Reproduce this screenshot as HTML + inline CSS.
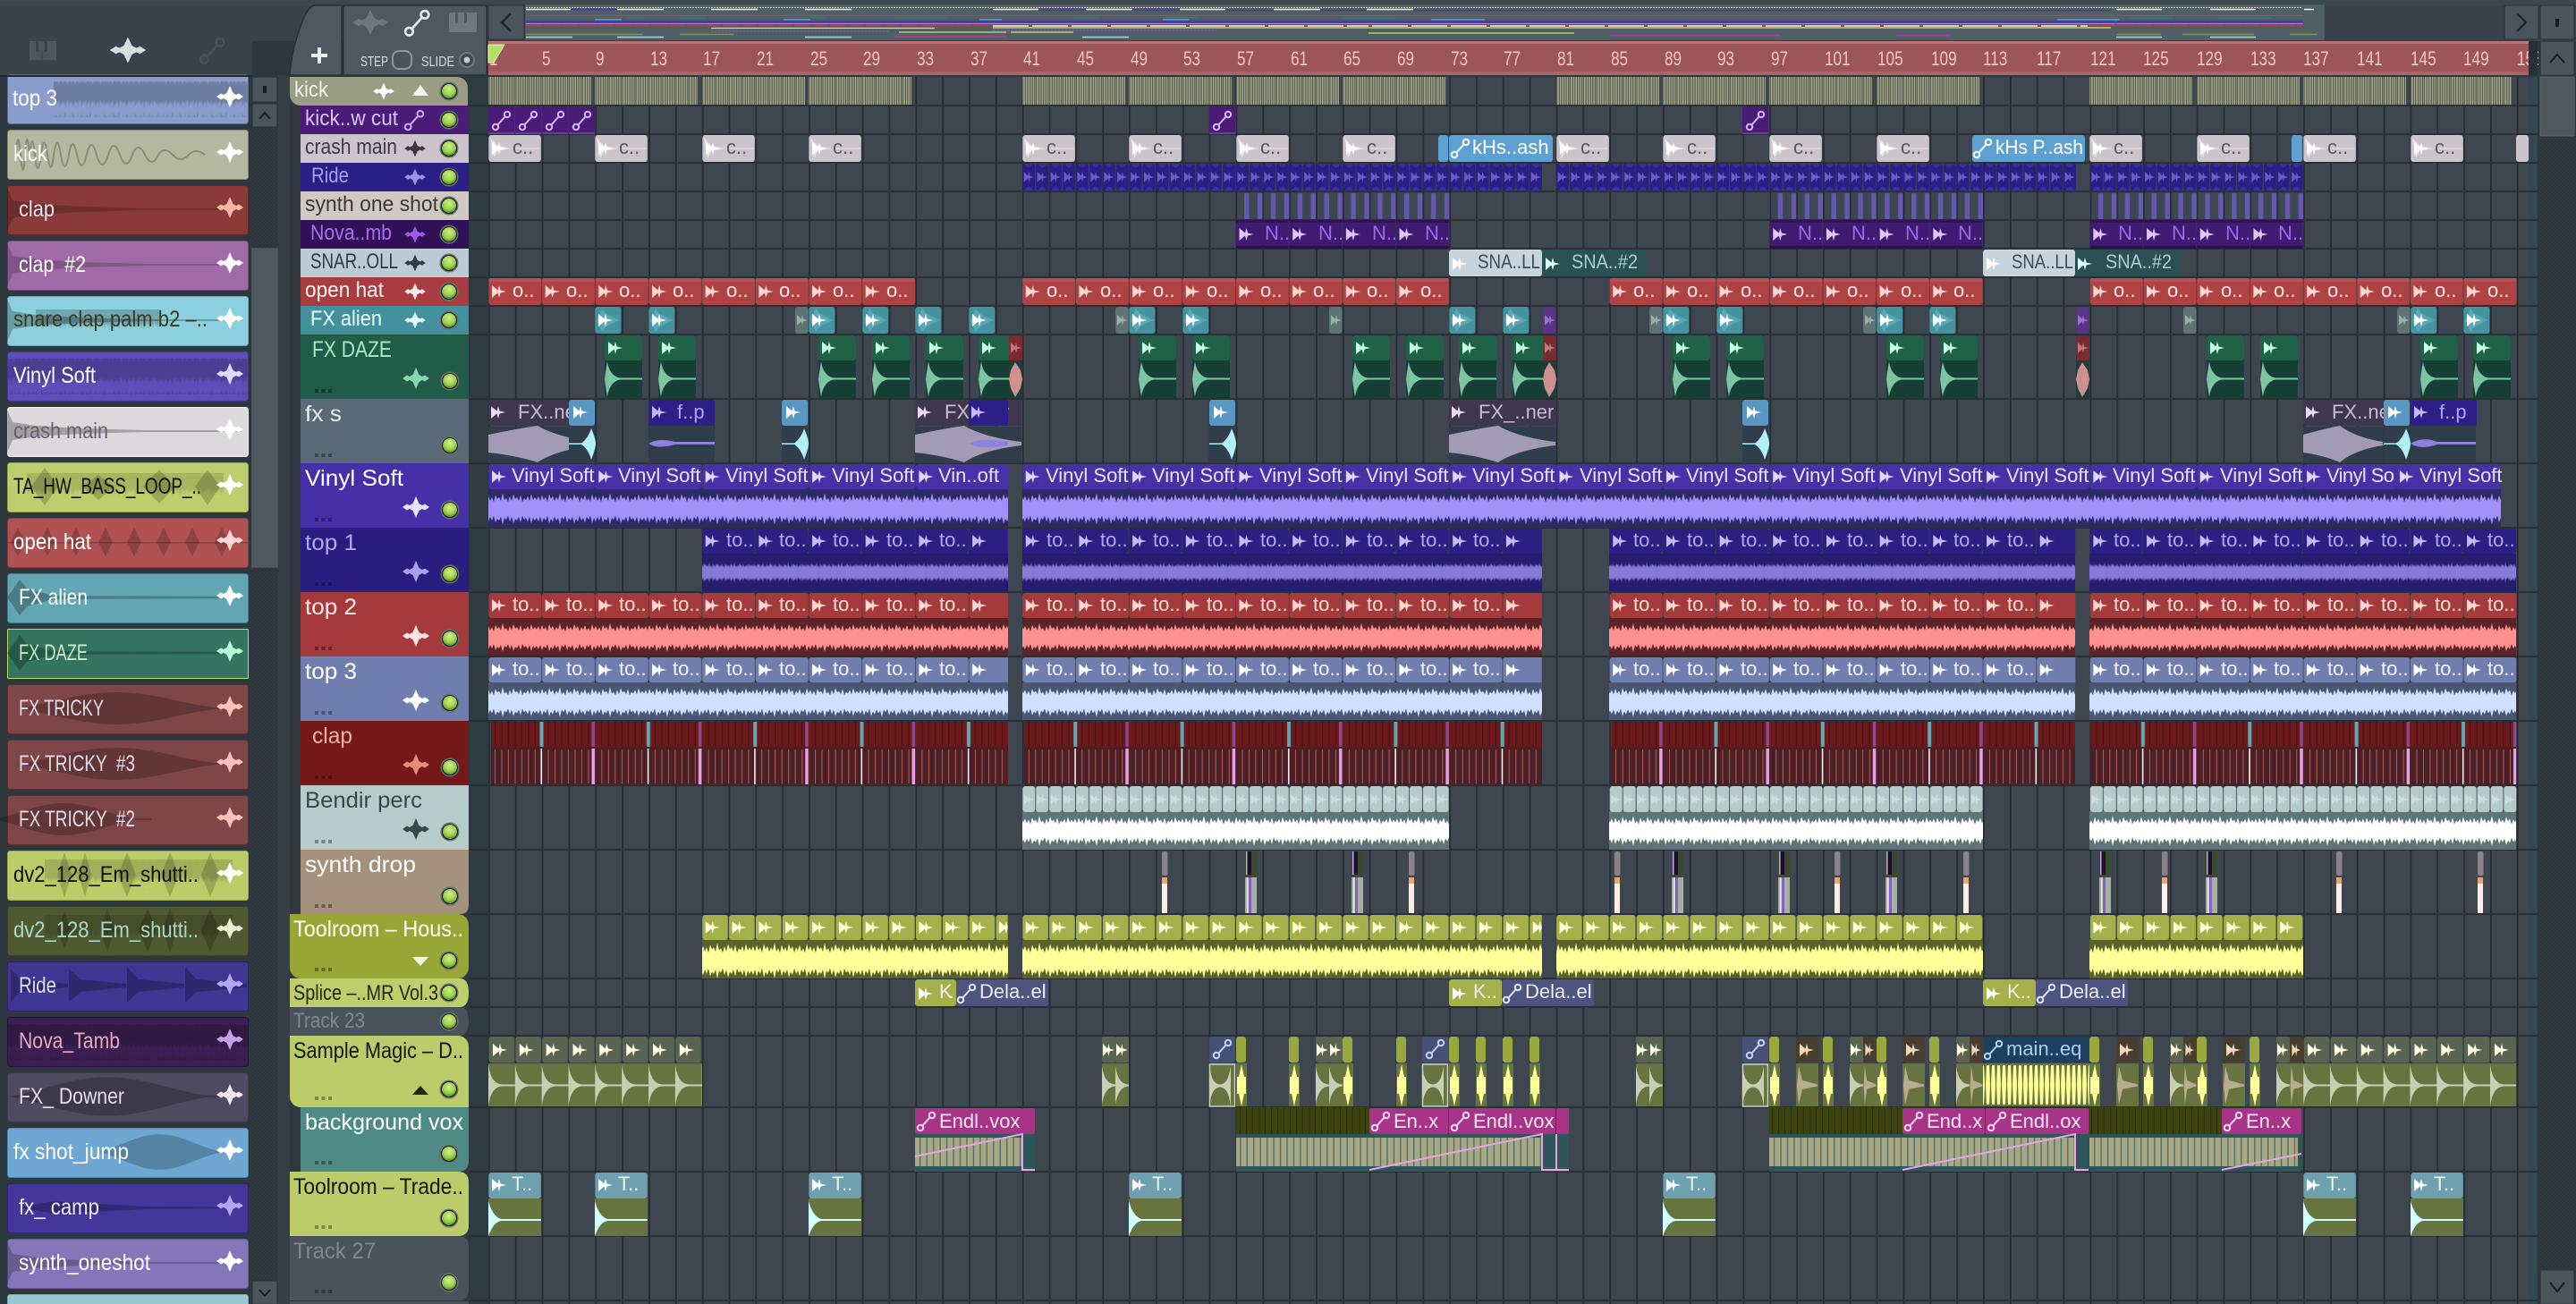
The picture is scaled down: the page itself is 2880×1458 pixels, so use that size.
<!DOCTYPE html>
<html><head><meta charset="utf-8"><title>Playlist</title>
<style>
html,body{margin:0;padding:0;background:#2d373e;overflow:hidden}
svg{display:block}
text{font-family:"Liberation Sans",sans-serif;white-space:pre}
.c text{font-size:22px}
.rk text{font-size:25px}
.ts text{font-size:24px}
.tb text{font-size:25px}
.rl text{font-size:22px;fill:#F5C8BC;transform-box:fill-box;transform-origin:0 0;transform:scaleX(.78)}
</style></head><body>
<svg xmlns="http://www.w3.org/2000/svg" width="2880" height="1458" viewBox="0 0 2880 1458">
<defs>
<path id="p" d="M0 0L6.5 5.5 8 0 9.5 5.5 16 7 9.5 8.5 8 14 6.5 8.5 0 14Z"/>
<path id="w" d="M0-12L3.500-4 7-2 10-3.500 15 0 10 3.500 7 2 3.500 4 0 12-3.500 4-7 2-10 3.500-15 0-10-3.500-7-2-3.500-4Z"/>
<g id="l" fill="none" stroke-width="2"><circle cx="4" cy="18" r="3.2"/><circle cx="17" cy="4" r="3.2"/><path d="M6.5 15.5L14.500 6.500"/></g>
<radialGradient id="lg" cx=".5" cy=".35" r=".7"><stop offset="0" stop-color="#D2F088"/><stop offset=".6" stop-color="#9CCF4C"/><stop offset="1" stop-color="#4E7A1E"/></radialGradient>
<g id="L"><circle r="10.500" fill="#66727A"/><circle r="9" fill="#101408"/><circle r="8" fill="url(#lg)"/></g>
<g id="D"><rect x="0" y="0" width="4" height="4" /><rect x="7.500" y="0" width="4" height="4"/><rect x="15" y="0" width="4" height="4"/></g>
<path id="n" d="M0 0V-9L1 -13 2 -8 3 -14 4 -9 5 -12 6 -7 7 -15 8 -10 9 -13 10 -8 11 -12 12 -9 13 -16 14 -8 15 -11 16 -7 17 -14 18 -9 19 -12 20 -8 21 -15 22 -10 23 -13 24 -7 25 -12 26 -9 27 -14 28 -8 29 -11 30 -7 31 -15 32 -9 33 -13 34 -8 35 -12 36 -7 37 -14 38 -10 39 -12 40 -8 41 -16 42 -9 43 -11 44 -7 45 -13 46 -8 47 -15 48 -10 49 -12 50 -8 51 -14 52 -7 53 -11 54 -9 55 -13 56 -8 57 -15 58 -9 59 -12 60 -9V0Z"/>
<g id="nn"><use href="#n"/><use href="#n" transform="scale(1,-1)"/></g>
<pattern id="pG" x="546" y="0" width="29.84" height="1458" patternUnits="userSpaceOnUse"><rect width="29.84" height="1458" fill="#3E4650"/><rect x="0" width="1.800" height="1458" fill="#252C32"/></pattern>
<pattern id="pK" x="546" y="86" width="14.92" height="32" patternUnits="userSpaceOnUse"><rect width="14.92" height="32" fill="#A6A990"/><path d="M1 0V32M3.800 0V32M6.300 0V32M9 0V32M11.500 0V32M14 0V32" stroke="#565849" stroke-width="1.200"/></pattern>
<pattern id="pR" x="546" y="182" width="14.92" height="32" patternUnits="userSpaceOnUse"><rect x=".4" y="1" width="14.100" height="30" rx="3" fill="#2A1F84"/><path d="M3 1Q7.500 10 12 1zM3 31Q7.500 22 12 31z" fill="#3D2FA0"/><use href="#p" transform="translate(2,10) scale(.7,.85)" fill="#6C5CC8"/></pattern>
<pattern id="pS" x="546" y="214" width="14.92" height="32" patternUnits="userSpaceOnUse"><rect x="9.500" y="2" width="5.500" height="29" rx="1.500" fill="#6558AE"/></pattern>
<pattern id="pN" x="546" y="246" width="59.68" height="32" patternUnits="userSpaceOnUse"><rect x=".3" y="0" width="59" height="32" rx="2" fill="#3F1B72"/><rect x=".3" y="0" width="59" height="3" fill="#2F1258"/><rect x=".3" y="29" width="59" height="3" fill="#2A0F50"/><use href="#p" x="4" y="9" fill="#E0C8FF"/></pattern>
<pattern id="pH" x="546" y="310" width="59.68" height="32" patternUnits="userSpaceOnUse"><rect x=".3" y="1" width="59" height="30" rx="3" fill="#AE4245"/><rect x=".3" y="1" width="59" height="4" rx="2" fill="#B85052"/><use href="#p" x="4" y="9" fill="#FFD8D0"/></pattern>
<pattern id="pV" x="546" y="518" width="119.36" height="30" patternUnits="userSpaceOnUse"><rect x=".3" y="1" width="118.600" height="28" rx="3" fill="#4631A6"/><use href="#p" x="4" y="8" fill="#E0D8FF"/></pattern>
<pattern id="p1" x="546" y="590" width="59.68" height="30" patternUnits="userSpaceOnUse"><rect x=".3" y="1" width="59" height="28" rx="3" fill="#2C1E82"/><use href="#p" x="4" y="8" fill="#C4BCF8"/></pattern>
<pattern id="p2" x="546" y="662" width="59.68" height="30" patternUnits="userSpaceOnUse"><rect x=".3" y="1" width="59" height="28" rx="3" fill="#A53A3C"/><use href="#p" x="4" y="8" fill="#FFD8D4"/></pattern>
<pattern id="p3" x="546" y="734" width="59.68" height="30" patternUnits="userSpaceOnUse"><rect x=".3" y="1" width="59" height="28" rx="3" fill="#707EAF"/><use href="#p" x="4" y="8" fill="#fff"/></pattern>
<pattern id="wV" x="0" y="549" width="120" height="40" patternUnits="userSpaceOnUse"><use href="#nn" transform="translate(0,20) scale(2,1.100)" fill="#A090F8"/></pattern>
<pattern id="w1" x="0" y="620" width="60" height="40" patternUnits="userSpaceOnUse"><use href="#nn" transform="translate(0,20) scale(1,.72)" fill="#8878D8"/></pattern>
<pattern id="w2" x="0" y="693" width="120" height="40" patternUnits="userSpaceOnUse"><use href="#nn" transform="translate(0,20) scale(2,1)" fill="#FF9090"/></pattern>
<pattern id="w3" x="0" y="765" width="120" height="40" patternUnits="userSpaceOnUse"><use href="#nn" transform="translate(0,20) scale(2,1.050)" fill="#D0E0FF"/></pattern>
<pattern id="wB" x="0" y="909" width="120" height="40" patternUnits="userSpaceOnUse"><use href="#nn" transform="translate(0,20) scale(2,1.050)" fill="#FFFFFF"/></pattern>
<pattern id="wT" x="0" y="1054" width="120" height="40" patternUnits="userSpaceOnUse"><use href="#nn" transform="translate(0,20) scale(2,1.250)" fill="#FFFF99"/></pattern>
<pattern id="pC" x="546" y="806" width="119.36" height="72" patternUnits="userSpaceOnUse"><rect y="1" width="119.36" height="28" fill="#6B1A1C"/><rect y="29" width="119.36" height="42" fill="#4A2024"/>
<path d="M7.500 1V29M15 1V29M22.400 1V29M30 1V29M37.300 1V29M44.800 1V29M52.200 1V29M67 1V29M74.600 1V29M82 1V29M89.500 1V29M97 1V29M104.400 1V29M112 1V29" stroke="#4E1012" stroke-width="1.500"/>
<path d="M7.500 32V70M15 32V70M22.400 32V70M30 32V70M37.300 32V70M44.800 32V70M52.200 32V70M67 32V70M74.600 32V70M82 32V70M89.500 32V70M97 32V70M104.400 32V70M112 32V70" stroke="#B85C5C" stroke-width="1"/>
<rect x="57.500" y="1" width="4" height="28" fill="#62A8B2"/><rect x="58.500" y="31" width="1.500" height="40" fill="#fff"/><rect x="115.500" y="1" width="3.500" height="28" fill="#8A4A90"/><rect x="115.500" y="31" width="3.500" height="40" fill="#E8A0E8"/></pattern>
<pattern id="pB" x="546" y="878" width="14.92" height="30" patternUnits="userSpaceOnUse"><rect x=".4" y="1" width="14.100" height="29" rx="3" fill="#B5CBCA"/><use href="#p" transform="translate(2,10) scale(.7,.85)" fill="#CFDEDC"/></pattern>
<pattern id="pT" x="546" y="1022" width="29.84" height="30" patternUnits="userSpaceOnUse"><rect x=".5" y="1" width="28.600" height="28" rx="3" fill="#A6B04A"/><use href="#p" x="4" y="8" fill="#FFFFD8"/></pattern>
<pattern id="pM" x="546" y="0" width="29.84" height="80" patternUnits="userSpaceOnUse"><rect x=".5" y="1" width="28.400" height="29" rx="3" fill="#5A6450"/><use href="#p" x="5" y="9" fill="#FFFFE8"/><rect y="31" width="29.84" height="48" fill="#67743F"/><path d="M0 32C2 46 6 54 16 54.500L29.840 54.500V56.500L16 56.500C6 57 2 65 0 79Z" fill="#C8CEB4"/></pattern>
<pattern id="pY" x="0" y="1238" width="7" height="72" patternUnits="userSpaceOnUse"><rect y="0" width="7" height="30" fill="#3C4210"/><rect y="0" width="1" height="30" fill="#2C3208"/></pattern>
<pattern id="pZ" x="0" y="1272" width="7.46" height="32" patternUnits="userSpaceOnUse"><rect width="7.46" height="32" fill="#A9A884"/><rect x="6" width="1.400" height="32" fill="#50706A"/></pattern>
<pattern id="pQ" x="0" y="31" width="6" height="48" patternUnits="userSpaceOnUse"><path d="M1 2H4L5 24 4 46H1L0 24Z" fill="#FFFF99"/></pattern>
<pattern id="rN" x="0" y="0" width="60" height="40" patternUnits="userSpaceOnUse"><use href="#nn" transform="translate(0,20) scale(1,1.150)" fill="#000" fill-opacity=".2"/></pattern>
<pattern id="pHatch" x="0" y="0" width="4" height="4" patternUnits="userSpaceOnUse"><rect width="4" height="4" fill="#2C353B"/><path d="M0 4L4 0" stroke="#333D44" stroke-width="1"/></pattern>
<pattern id="pDot" x="588" y="0" width="3" height="3" patternUnits="userSpaceOnUse"><rect width="2" height="3" fill="#C8CCC0"/></pattern>

<g id="gA"><rect x=".3" y="1" width="29" height="30" rx="3" fill="#47929F"/><path d="M2 16L8 3 13 9 25 15 29 16 25 17 13 23 8 29Z" fill="#5AA8B6"/><use href="#p" x="4" y="9" fill="#fff"/></g>
<g id="gG"><rect y="1" width="14.500" height="30" rx="3" fill="#5E7472"/><use href="#p" transform="translate(2,10) scale(.75,.85)" fill="#9CAFA8"/></g>
<g id="gP"><rect y="1" width="14.500" height="30" rx="2" fill="#5A3488"/><use href="#p" transform="translate(2,10) scale(.75,.85)" fill="#9A74C0"/></g>
<g id="gZ"><rect y="1" width="42" height="70" fill="#163F36"/><rect y="1" width="42" height="28" rx="3" fill="#1F6248"/><use href="#p" x="4" y="8" fill="#C8FFE4"/><path d="M0 50C1 42 2 36 3 30C4 38 8 47 17 48.500H42V50.500H17C8 52 4 62 3 70C2 64 1 58 0 50Z" fill="#7BC4A4"/></g>
<g id="gZr"><rect y="1" width="15" height="70" fill="#1E3D36"/><rect y="1" width="15" height="28" rx="2" fill="#7A2A30"/><use href="#p" transform="translate(2,9) scale(.75,.85)" fill="#B87A7A"/><path d="M7 31L13 40 15 50 13 60 7 70 2 60 0 50 2 40Z" fill="#D09090"/></g>
<g id="gF"><rect y="31" width="119" height="41" fill="#2F3E4A"/><path d="M0 50V40C20 36 40 32 55 30C65 36 85 44 119 48V52C85 56 65 64 55 71C40 66 20 62 0 60Z" fill="#A39AB4"/></g>
<g id="gU"><rect y="30" width="29" height="42" fill="#2F3E4A"/><rect y="1" width="29" height="29" rx="3" fill="#5896C4"/><use href="#p" x="5" y="8" fill="#fff"/><path d="M0 49.500H14C18 47 23 40 25 33C28 40 30 46 30 50C30 54 28 60 25 68C23 60 18 53 14 51H0Z" fill="#B0F0FF"/></g>
<g id="gC"><rect x=".3" y="1" width="58.500" height="30" rx="3" fill="#CBC5CB"/><rect x="27" y="15.500" width="31" height="1" fill="#E6E2E6"/><path d="M2 4L6 27 10 19 26 16 10 13Z" fill="#E8E4E8"/><use href="#p" x="4" y="9" fill="#fff"/></g>
<g id="gK"><rect y="0" width="29" height="31" fill="#4A1C78"/><rect y="29" width="29" height="2" fill="#6A3AA8"/><use href="#l" x="4" y="5" stroke="#D8B8F8"/></g>
<g id="gX"><rect x=".3" y="1" width="58.500" height="29" rx="3" fill="#6FA0B0"/><use href="#p" x="4" y="8" fill="#fff"/><rect y="30" width="59" height="42" fill="#67743F"/><path d="M0 33C3 42 6 50 14 53H59V55H14C6 57 3 65 0 72Z" fill="#D0FFFF"/></g>
<g id="gS1"><rect x="1" y="2" width="6.500" height="27" rx="2" fill="#8D8088"/><rect x="1" y="31" width="6" height="40" fill="#FFEDE6"/><rect x="1" y="31" width="6" height="7" fill="#F0A860"/></g>
<g id="gS2"><rect width="13" y="2" height="27" fill="#3A4A2E"/><rect x="1" y="2" width="6" height="26" fill="#1E1028"/><rect x="1" y="2" width="1.500" height="26" fill="#C8A8E8"/><rect y="31" width="13" height="40" fill="#A4B0A0"/><rect x="4" y="31" width="3" height="40" fill="#8860C0"/><rect x="2" y="31" width="1.500" height="40" fill="#E8E8E8"/></g>
<g id="gb"><rect y="1" width="29" height="29" rx="2" fill="#475078"/><use href="#l" x="4" y="4" stroke="#C4D4F4"/><rect y="31" width="29" height="48" fill="#67743F"/><rect x=".5" y="32" width="28" height="47" fill="none" stroke="#C8CED0" stroke-width="1.500"/><path d="M0 34C2 47 5 54 12 54.500 19 54 22 47 24 34V79C22 65 19 58 12 57.500 5 58 2 65 0 79Z" fill="#C8CEB4"/></g>
<g id="gt"><rect y="1" width="11" height="29" rx="3" fill="#98A83C"/><rect y="31" width="12" height="48" fill="#67743F"/><path d="M6 32L11 55.500 6 79 1 55.500Z" fill="#FFFF99"/><rect y="46" x="1" width="10" height="19" fill="#FFFF99"/></g>
<g id="gr"><rect y="1" width="25" height="29" rx="2" fill="#4A3F2E"/><use href="#p" x="4" y="9" fill="#F0D8C0"/><rect y="31" width="25" height="48" fill="#67743F"/><path d="M3 34L7 50 24 54.500V56.500L7 60 3 77 1 56Z" fill="#B8AC90"/></g>
<g id="gg"><rect y="1" width="15" height="29" rx="2" fill="#5A6450"/><use href="#p" transform="translate(1,9) scale(.8,1)" fill="#FFFFE8"/><rect y="31" width="15" height="48" fill="#67743F"/><path d="M0 34C2 47 6 54 15 54.500V56.500C6 57 2 65 0 77Z" fill="#C8CEB4"/></g>

<path id="rD" d="M8 0V-24L14 -10 40 -6 90 -3 160 -1 270 -1V1H160L90 3 40 6 14 10 8 24Z"/>
<path id="rL" d="M20 0C60 -6 90 -18 130 -18C170 -18 200 -6 240 -1H270V1H240C200 6 170 18 130 18C90 18 60 6 20 0Z"/>
<path id="rB" d="M8 0L22 -20 30 -10 60 -2 270 -1V1L60 2 30 10 22 20Z"/>
</defs>

<rect width="2880" height="1458" fill="#2D373E"/>
<rect width="2880" height="46" fill="#38424A"/>
<rect width="282" height="84" fill="#3A434A"/>
<rect x="0" y="84" width="282" height="2" fill="#22292E"/>
<rect x="0" y="0" width="2880" height="6" fill="#3E474E"/>
<rect x="310" y="84" width="14" height="1374" fill="#363F46"/>
<rect x="324" y="84" width="200" height="1374" fill="#2F383E"/>

<!-- rack header icons -->
<path d="M33 46h30v21h-30zM40 46v12h3v-12zM50 46v12h3v-12zM46.500 58v9h1v-9z" fill="#4C565E" fill-rule="evenodd"/>
<use href="#w" transform="translate(143,56) scale(1.350,1.200)" fill="#D6DEE0"/>
<use href="#l" transform="translate(223,42) scale(1.350)" stroke="#48525A"/>

<!-- tool box -->
<path d="M354 6H382V84H324C326 55 336 25 344 12Q347 6 354 6Z" fill="#4E5860" stroke="#2A3136" stroke-width="1.500"/>
<rect x="348" y="60" width="18" height="4" fill="#EDEFEF"/><rect x="355" y="53" width="4" height="18" fill="#EDEFEF"/>
<rect x="384" y="6" width="160" height="78" fill="#4E5860" stroke="#2A3136" stroke-width="1.500"/>
<use href="#w" transform="translate(414,25) scale(1.350,1.150)" fill="#6D7880"/>
<use href="#l" transform="translate(452,11) scale(1.350)" stroke="#E4E8E8"/>
<path d="M502 14h31v22h-31zM509 14v12h3v-12zM519 14v12h3v-12z" fill="#6D7880" fill-rule="evenodd"/>
<text x="403" y="74" font-size="16" fill="#D8DCDC" textLength="31" lengthAdjust="spacingAndGlyphs">STEP</text>
<rect x="439" y="57" width="21" height="20" rx="7" fill="#4A545C" stroke="#8C969C" stroke-width="2"/>
<text x="471" y="74" font-size="16" fill="#D8DCDC" textLength="37" lengthAdjust="spacingAndGlyphs">SLIDE</text>
<circle cx="522" cy="67" r="8" fill="#3E474E" stroke="#6E7880" stroke-width="2"/><circle cx="522" cy="67" r="3.500" fill="#C4CACA"/>

<!-- arrows and overview -->
<rect x="546" y="6" width="40" height="38" fill="#4B555D" stroke="#2A3136"/>
<path d="M571 15L561 25 571 35" fill="none" stroke="#20282E" stroke-width="2.500"/>
<rect x="588" y="6" width="2010" height="38" fill="#4F5F66" stroke="#5B6A70"/>
<g>
<rect x="588" y="8" width="1985" height="1" fill="url(#pDot)"/>
<path d="M588 10.500h50M690 10.500h52M795 10.500h52M900 10.500h52M1110 10.500h51M1214 10.500h52M1319 10.500h51M1424 10.500h52M1528 10.500h52M2366 10.500h51M2471 10.500h51M2576 10.500h11" stroke="#F4F6F4" stroke-width="1.500"/>
<path d="M638 10.500h52M1161 11h53M1266 11h53M1370 11.500h54M1476 11.500h52M1580 11.500h780" stroke="#4A3A9A" stroke-width="1.500"/>
<path d="M588 17.500h1777M2366 17.500h209" stroke="#A04E50" stroke-width="1.200"/>
<path d="M700 19.500h20M760 20h30M905 19.500h20M1000 19.500h60M1200 19.500h30M1300 19.500h40M1500 20h60M2380 20h50M2480 20h60" stroke="#2A8060" stroke-width="1.500"/>
<path d="M665 22h30M876 22h30M1095 22h25M1300 22h30M1600 22h60M2300 22h70" stroke="#5FA8D8" stroke-width="1.500"/>
<path d="M588 24h1777M2366 24h209" stroke="#4A38A8" stroke-width="2.500"/>
<path d="M588 26.500h1777M2366 26.500h209" stroke="#9A88C8" stroke-width="1"/>
<path d="M588 28.500h1985" stroke="#B84044" stroke-width="1.500" stroke-dasharray="18 2"/>
<path d="M795 31.500h250M1110 31h1250" stroke="#D8E070" stroke-width="1.200"/>
<path d="M1110 29h420M1534 29h800" stroke="#F4F4F0" stroke-width="1.500" stroke-dasharray="40 4"/>
<path d="M1110 34h250M795 35h200" stroke="#7A5CB0" stroke-width="1.500" stroke-dasharray="3 1"/>
<path d="M1005 36h120M1130 36h70M1530 37h230" stroke="#BECE50" stroke-width="1.500"/>
<path d="M588 38.500h130M760 38.500h60M2366 38.500h50M2440 38.500h80M2560 38.500h30" stroke="#7E8E60" stroke-width="1.500"/>
<path d="M1000 40.500h125M1800 39.500h190M2120 39.500h60" stroke="#A83C98" stroke-width="2"/>
<path d="M588 41.500h52M690 41.500h52M900 41.500h52M1210 41.500h52M2366 41.500h51M2471 41.500h51" stroke="#9ADCE8" stroke-width="1.500"/>
</g>
<rect x="2800" y="6" width="38" height="38" fill="#4B555D" stroke="#2A3136"/>
<path d="M2814 15L2824 25 2814 35" fill="none" stroke="#20282E" stroke-width="2.500"/>
<rect x="2840" y="6" width="38" height="38" fill="#4B555D" stroke="#2A3136"/>
<rect x="2857" y="21" width="4" height="9" fill="#161C20"/>

<!-- ruler -->
<rect x="546" y="46" width="2281" height="38" fill="#9C565A"/>
<rect x="546" y="46" width="2281" height="3" fill="#BC7274"/>
<rect x="546" y="80" width="2281" height="4" fill="#AC6466"/>
<rect x="2827" y="46" width="10" height="38" fill="#253038"/>
<g class="rl">
<text x="547" y="73">1</text><text x="606" y="73">5</text><text x="666" y="73">9</text><text x="727" y="73">13</text><text x="786" y="73">17</text><text x="846" y="73">21</text><text x="906" y="73">25</text><text x="965" y="73">29</text><text x="1025" y="73">33</text><text x="1085" y="73">37</text><text x="1144" y="73">41</text><text x="1204" y="73">45</text><text x="1264" y="73">49</text><text x="1323" y="73">53</text><text x="1383" y="73">57</text><text x="1443" y="73">61</text><text x="1502" y="73">65</text><text x="1562" y="73">69</text><text x="1622" y="73">73</text><text x="1681" y="73">77</text><text x="1741" y="73">81</text><text x="1801" y="73">85</text><text x="1861" y="73">89</text><text x="1920" y="73">93</text><text x="1980" y="73">97</text><text x="2040" y="73">101</text><text x="2099" y="73">105</text><text x="2159" y="73">109</text><text x="2217" y="73">113</text><text x="2277" y="73">117</text><text x="2337" y="73">121</text><text x="2396" y="73">125</text><text x="2456" y="73">129</text><text x="2516" y="73">133</text><text x="2575" y="73">137</text><text x="2635" y="73">141</text><text x="2695" y="73">145</text><text x="2754" y="73">149</text><text x="2814" y="73">153</text>
</g>
<rect x="2827" y="46" width="10" height="38" fill="#253038"/>
<path d="M546 50H564L552 70H546Z" fill="#B4E060" stroke="#F0F8E0" stroke-width="1"/>

<!-- grid -->
<rect x="525" y="86" width="21" height="1372" fill="#2E3B43"/>
<rect x="546" y="86" width="2291" height="1372" fill="url(#pG)"/>
<rect x="2827" y="86" width="10" height="1372" fill="#2F4A54" fill-opacity=".6"/>
<path d="M525 118H2837M525 150H2837M525 182H2837M525 214H2837M525 246H2837M525 278H2837M525 310H2837M525 342H2837M525 374H2837M525 446H2837M525 518H2837M525 590H2837M525 662H2837M525 734H2837M525 806H2837M525 878H2837M525 950H2837M525 1022H2837M525 1094H2837M525 1126H2837M525 1158H2837M525 1238H2837M525 1310H2837M525 1382H2837M525 1454H2837" stroke="#282F35" stroke-width="2"/>

<!-- kick -->
<path fill="url(#pK)" d="M546 86h115v31h-115zM665 86h115v31h-115zM785 86h115v31h-115zM904 86h115v31h-115zM1143 86h115v31h-115zM1262 86h115v31h-115zM1382 86h115v31h-115zM1501 86h115v31h-115zM1740 86h115v31h-115zM1859 86h115v31h-115zM1978 86h115v31h-115zM2098 86h115v31h-115zM2336 86h115v31h-115zM2456 86h115v31h-115zM2575 86h115v31h-115zM2695 86h113v31h-113z"/>
<!-- kick cut -->
<g transform="translate(0,119)"><use href="#gK" x="546"/><use href="#gK" x="576"/><use href="#gK" x="606"/><use href="#gK" x="636"/><use href="#gK" x="1352"/><use href="#gK" x="1948"/></g>
<!-- crash -->
<g transform="translate(0,150)"><use href="#gC" x="546"/><use href="#gC" x="665"/><use href="#gC" x="785"/><use href="#gC" x="904"/><use href="#gC" x="1143"/><use href="#gC" x="1262"/><use href="#gC" x="1382"/><use href="#gC" x="1501"/><use href="#gC" x="1740"/><use href="#gC" x="1859"/><use href="#gC" x="1978"/><use href="#gC" x="2098"/><use href="#gC" x="2336"/><use href="#gC" x="2456"/><use href="#gC" x="2575"/><use href="#gC" x="2695"/>
<rect x="2813" y="1" width="14" height="30" rx="3" fill="#CBC5CB"/>
<rect x="1608" y="1" width="11" height="30" rx="3" fill="#5FA0D2"/><rect x="2562" y="1" width="12" height="30" rx="3" fill="#5FA0D2"/>
<rect x="1620" y="1" width="116" height="30" rx="3" fill="#5FA0D2"/><use href="#l" x="1622" y="5" stroke="#fff"/><rect x="2205" y="1" width="126" height="30" rx="3" fill="#5FA0D2"/><use href="#l" x="2206" y="5" stroke="#fff"/></g>
<g class="c" transform="translate(0,172)" fill="#5C5660"><text x="573">c..</text><text x="692">c..</text><text x="812">c..</text><text x="931">c..</text><text x="1170">c..</text><text x="1289">c..</text><text x="1409">c..</text><text x="1528">c..</text><text x="1767">c..</text><text x="1886">c..</text><text x="2005">c..</text><text x="2125">c..</text><text x="2363">c..</text><text x="2483">c..</text><text x="2602">c..</text><text x="2722">c..</text>
<text x="1646" fill="#fff">kHs..ash</text><text x="2231" fill="#fff" textLength="98" lengthAdjust="spacingAndGlyphs">kHs P..ash</text></g>
<!-- ride, synth, nova -->
<rect x="1143" y="182" width="581" height="32" fill="url(#pR)"/><rect x="1740" y="182" width="581" height="32" fill="url(#pR)"/><rect x="2336" y="182" width="239" height="32" fill="url(#pR)"/>
<rect x="1382" y="214" width="239" height="32" fill="url(#pS)"/><rect x="1978" y="214" width="239" height="32" fill="url(#pS)"/><rect x="2336" y="214" width="239" height="32" fill="url(#pS)"/>
<rect x="1382" y="246" width="239" height="32" fill="url(#pN)"/><rect x="1978" y="246" width="239" height="32" fill="url(#pN)"/><rect x="2336" y="246" width="239" height="32" fill="url(#pN)"/>
<g class="c" transform="translate(0,268)" fill="#9A6AF0"><text x="1414">N..</text><text x="1474">N..</text><text x="1534">N..</text><text x="1593">N..</text><text x="2010">N..</text><text x="2070">N..</text><text x="2130">N..</text><text x="2189">N..</text><text x="2368">N..</text><text x="2428">N..</text><text x="2488">N..</text><text x="2547">N..</text></g>
<!-- SNAR -->
<g transform="translate(0,279)"><rect x="1724" width="118" height="30" rx="2" fill="#2A5054"/><rect x="2320" width="118" height="30" rx="2" fill="#2A5054"/><rect x="1620" width="104" height="30" rx="3" fill="#C8D4DC"/><rect x="2217" width="103" height="30" rx="3" fill="#C8D4DC"/>
<use href="#p" x="1624" y="9" fill="#fff"/><use href="#p" x="2221" y="9" fill="#fff"/><use href="#p" x="1728" y="9" fill="#DFF"/><use href="#p" x="2323" y="9" fill="#DFF"/></g>
<g class="c" transform="translate(0,300)"><g fill="#3C4C5A"><text x="1652" textLength="70" lengthAdjust="spacingAndGlyphs">SNA..LL</text><text x="2249" textLength="69" lengthAdjust="spacingAndGlyphs">SNA..LL</text></g><g fill="#A8D0D0"><text x="1757" textLength="74" lengthAdjust="spacingAndGlyphs">SNA..#2</text><text x="2354" textLength="74" lengthAdjust="spacingAndGlyphs">SNA..#2</text></g></g>
<!-- open hat -->
<rect x="546" y="310" width="477.400" height="32" fill="url(#pH)"/><rect x="1142.800" y="310" width="477.400" height="32" fill="url(#pH)"/><rect x="1799.300" y="310" width="417.800" height="32" fill="url(#pH)"/><rect x="2336.400" y="310" width="477.400" height="32" fill="url(#pH)"/>
<g class="c" transform="translate(0,332)" fill="#FFE8E0"><text x="573">o..</text><text x="633">o..</text><text x="692">o..</text><text x="752">o..</text><text x="812">o..</text><text x="871">o..</text><text x="931">o..</text><text x="991">o..</text><text x="1170">o..</text><text x="1230">o..</text><text x="1289">o..</text><text x="1349">o..</text><text x="1409">o..</text><text x="1468">o..</text><text x="1528">o..</text><text x="1588">o..</text><text x="1826">o..</text><text x="1886">o..</text><text x="1946">o..</text><text x="2005">o..</text><text x="2065">o..</text><text x="2125">o..</text><text x="2184">o..</text><text x="2363">o..</text><text x="2423">o..</text><text x="2483">o..</text><text x="2542">o..</text><text x="2602">o..</text><text x="2662">o..</text><text x="2722">o..</text><text x="2781">o..</text></g>
<!-- FX alien -->
<g transform="translate(0,342)"><use href="#gG" x="889"/><use href="#gG" x="1247"/><use href="#gG" x="1486"/><use href="#gG" x="1844"/><use href="#gG" x="2083"/><use href="#gG" x="2441"/><use href="#gG" x="2680"/><use href="#gP" x="1725"/><use href="#gP" x="2321"/>
<use href="#gA" x="665"/><use href="#gA" x="725"/><use href="#gA" x="904"/><use href="#gA" x="964"/><use href="#gA" x="1023"/><use href="#gA" x="1083"/><use href="#gA" x="1262"/><use href="#gA" x="1322"/><use href="#gA" x="1620"/><use href="#gA" x="1680"/><use href="#gA" x="1859"/><use href="#gA" x="1919"/><use href="#gA" x="2098"/><use href="#gA" x="2157"/><use href="#gA" x="2695"/><use href="#gA" x="2754"/></g>
<!-- FX DAZE -->
<g transform="translate(0,374)"><use href="#gZ" x="676"/><use href="#gZ" x="736"/><use href="#gZ" x="915"/><use href="#gZ" x="975"/><use href="#gZ" x="1035"/><use href="#gZ" x="1094"/><use href="#gZ" x="1273"/><use href="#gZ" x="1333"/><use href="#gZ" x="1512"/><use href="#gZ" x="1572"/><use href="#gZ" x="1631"/><use href="#gZ" x="1691"/><use href="#gZ" x="1870"/><use href="#gZ" x="1930"/><use href="#gZ" x="2109"/><use href="#gZ" x="2169"/><use href="#gZ" x="2467"/><use href="#gZ" x="2527"/><use href="#gZ" x="2706"/><use href="#gZ" x="2765"/>
<use href="#gZr" x="1128"/><use href="#gZr" x="1725"/><use href="#gZr" x="2321"/></g>
<!-- fx s -->
<g transform="translate(0,446)"><use href="#gF" x="546"/><use href="#gF" x="1023"/><use href="#gF" x="1620"/><use href="#gF" transform="translate(2575,0) scale(.75,1)"/>
<rect x="546" y="1" width="119" height="29" rx="2" fill="#3F3650"/><rect x="1023" y="1" width="119" height="29" rx="2" fill="#3F3650"/><rect x="1620" y="1" width="119" height="29" rx="2" fill="#3F3650"/><rect x="2575" y="1" width="90" height="29" rx="2" fill="#3F3650"/>
<use href="#p" x="549" y="8" fill="#E8DCF0"/><use href="#p" x="1026" y="8" fill="#E8DCF0"/><use href="#p" x="1623" y="8" fill="#E8DCF0"/><use href="#p" x="2578" y="8" fill="#E8DCF0"/></g>
<g class="c" transform="translate(0,468)" fill="#C8BCD0"><text x="579">FX..ne</text><text x="1056">FX..ner</text><text x="1653">FX_..ner</text><text x="2607">FX..ne</text></g>
<g transform="translate(0,446)"><use href="#gU" x="636"/><use href="#gU" x="874"/><use href="#gU" x="1352"/><use href="#gU" x="1948"/><use href="#gU" x="2665"/>
<rect x="725" y="30" width="74" height="42" fill="#2F3E4A"/><rect x="2695" y="30" width="73" height="42" fill="#2F3E4A"/>
<path d="M725 50C735 44 745 46 755 48H799V51H755C745 53 735 56 725 50ZM1083 50C1095 44 1110 46 1127 48V52C1110 54 1095 56 1083 50ZM2695 50C2705 44 2715 44 2725 48H2768V51H2725C2715 54 2705 56 2695 50Z" fill="#8E80E0"/>
<rect x="725" y="1" width="74" height="29" rx="2" fill="#2E1F88"/><rect x="1083" y="1" width="44" height="29" rx="2" fill="#2E1F88"/><rect x="2695" y="1" width="74" height="29" rx="2" fill="#2E1F88"/>
<use href="#p" x="729" y="8" fill="#C8B8FF"/><use href="#p" x="1086" y="8" fill="#C8B8FF"/><use href="#p" x="2699" y="8" fill="#C8B8FF"/></g>
<g class="c" transform="translate(0,468)" fill="#B0A4F0"><text x="757">f..p</text><text x="2727">f..p</text></g>

<!-- Vinyl -->
<rect x="546" y="546" width="581" height="44" fill="#2D2A66"/><rect x="1143" y="546" width="1653" height="44" fill="#2D2A66"/>
<rect x="546" y="549" width="581" height="40" fill="url(#wV)"/><rect x="1143" y="549" width="1653" height="40" fill="url(#wV)"/>
<rect x="546" y="518" width="581" height="30" fill="url(#pV)"/><rect x="1142.800" y="518" width="1536" height="30" fill="url(#pV)"/><rect x="2679" y="519" width="117" height="28" rx="3" fill="#4631A6"/><use href="#p" x="2683" y="526" fill="#E0D8FF"/>
<g class="c" transform="translate(0,539)" fill="#E8E4FF"><text x="572">Vinyl Soft</text><text x="691">Vinyl Soft</text><text x="811">Vinyl Soft</text><text x="930">Vinyl Soft</text><text x="1049">Vin..oft</text><text x="1169">Vinyl Soft</text><text x="1288">Vinyl Soft</text><text x="1408">Vinyl Soft</text><text x="1527">Vinyl Soft</text><text x="1646">Vinyl Soft</text><text x="1766">Vinyl Soft</text><text x="1885">Vinyl Soft</text><text x="2004">Vinyl Soft</text><text x="2124">Vinyl Soft</text><text x="2243">Vinyl Soft</text><text x="2362">Vinyl Soft</text><text x="2482">Vinyl Soft</text><text x="2601" textLength="76" lengthAdjust="spacing">Vinyl So</text><text x="2705">Vinyl Soft</text></g>
<!-- top 1 -->
<g fill="#251E70"><rect x="785" y="619" width="342" height="42"/><rect x="1143" y="619" width="581" height="42"/><rect x="1799" y="619" width="521" height="42"/><rect x="2336" y="619" width="477" height="42"/></g>
<g fill="url(#w1)"><rect x="785" y="620" width="342" height="40"/><rect x="1143" y="620" width="581" height="40"/><rect x="1799" y="620" width="521" height="40"/><rect x="2336" y="620" width="477" height="40"/></g>
<g fill="url(#p1)"><rect x="784.700" y="590" width="342" height="30"/><rect x="1142.800" y="590" width="581" height="30"/><rect x="1799.300" y="590" width="521" height="30"/><rect x="2336.400" y="590" width="477" height="30"/></g>
<g class="c" transform="translate(0,611)" fill="#B0A8F0"><text x="812">to..</text><text x="871">to..</text><text x="931">to..</text><text x="991">to..</text><text x="1050">to..</text><text x="1170">to..</text><text x="1230">to..</text><text x="1289">to..</text><text x="1349">to..</text><text x="1409">to..</text><text x="1468">to..</text><text x="1528">to..</text><text x="1588">to..</text><text x="1647">to..</text><text x="1826">to..</text><text x="1886">to..</text><text x="1946">to..</text><text x="2005">to..</text><text x="2065">to..</text><text x="2125">to..</text><text x="2184">to..</text><text x="2244">to..</text><text x="2363">to..</text><text x="2423">to..</text><text x="2483">to..</text><text x="2542">to..</text><text x="2602">to..</text><text x="2662">to..</text><text x="2722">to..</text><text x="2781">to..</text></g>
<!-- top 2 -->
<g fill="#5A2428"><rect x="546" y="691" width="581" height="42"/><rect x="1143" y="691" width="581" height="42"/><rect x="1799" y="691" width="521" height="42"/><rect x="2336" y="691" width="477" height="42"/></g>
<g fill="url(#w2)"><rect x="546" y="693" width="581" height="40"/><rect x="1143" y="693" width="581" height="40"/><rect x="1799" y="693" width="521" height="40"/><rect x="2336" y="693" width="477" height="40"/></g>
<g fill="url(#p2)"><rect x="546" y="662" width="581" height="30"/><rect x="1142.800" y="662" width="581" height="30"/><rect x="1799.300" y="662" width="521" height="30"/><rect x="2336.400" y="662" width="477" height="30"/></g>
<g class="c" transform="translate(0,683)" fill="#F8DCD8"><text x="573">to..</text><text x="633">to..</text><text x="692">to..</text><text x="752">to..</text><text x="812">to..</text><text x="871">to..</text><text x="931">to..</text><text x="991">to..</text><text x="1050">to..</text><text x="1170">to..</text><text x="1230">to..</text><text x="1289">to..</text><text x="1349">to..</text><text x="1409">to..</text><text x="1468">to..</text><text x="1528">to..</text><text x="1588">to..</text><text x="1647">to..</text><text x="1826">to..</text><text x="1886">to..</text><text x="1946">to..</text><text x="2005">to..</text><text x="2065">to..</text><text x="2125">to..</text><text x="2184">to..</text><text x="2244">to..</text><text x="2363">to..</text><text x="2423">to..</text><text x="2483">to..</text><text x="2542">to..</text><text x="2602">to..</text><text x="2662">to..</text><text x="2722">to..</text><text x="2781">to..</text></g>
<!-- top 3 -->
<g fill="#4A5672"><rect x="546" y="763" width="581" height="42"/><rect x="1143" y="763" width="581" height="42"/><rect x="1799" y="763" width="521" height="42"/><rect x="2336" y="763" width="477" height="42"/></g>
<g fill="url(#w3)"><rect x="546" y="765" width="581" height="40"/><rect x="1143" y="765" width="581" height="40"/><rect x="1799" y="765" width="521" height="40"/><rect x="2336" y="765" width="477" height="40"/></g>
<g fill="url(#p3)"><rect x="546" y="734" width="581" height="30"/><rect x="1142.800" y="734" width="581" height="30"/><rect x="1799.300" y="734" width="521" height="30"/><rect x="2336.400" y="734" width="477" height="30"/></g>
<g class="c" transform="translate(0,755)" fill="#F4F6FF"><text x="573">to..</text><text x="633">to..</text><text x="692">to..</text><text x="752">to..</text><text x="812">to..</text><text x="871">to..</text><text x="931">to..</text><text x="991">to..</text><text x="1050">to..</text><text x="1170">to..</text><text x="1230">to..</text><text x="1289">to..</text><text x="1349">to..</text><text x="1409">to..</text><text x="1468">to..</text><text x="1528">to..</text><text x="1588">to..</text><text x="1647">to..</text><text x="1826">to..</text><text x="1886">to..</text><text x="1946">to..</text><text x="2005">to..</text><text x="2065">to..</text><text x="2125">to..</text><text x="2184">to..</text><text x="2244">to..</text><text x="2363">to..</text><text x="2423">to..</text><text x="2483">to..</text><text x="2542">to..</text><text x="2602">to..</text><text x="2662">to..</text><text x="2722">to..</text><text x="2781">to..</text></g>
<!-- clap -->
<g fill="url(#pC)"><rect x="549" y="806" width="578" height="72"/><rect x="1145" y="806" width="579" height="72"/><rect x="1801" y="806" width="519" height="72"/><rect x="2338" y="806" width="475" height="72"/></g>
<!-- bendir -->
<g fill="#5F7478"><rect x="1143" y="907" width="477" height="43"/><rect x="1799" y="907" width="418" height="43"/><rect x="2336" y="907" width="477" height="43"/></g>
<g fill="url(#wB)"><rect x="1143" y="909" width="477" height="40"/><rect x="1799" y="909" width="418" height="40"/><rect x="2336" y="909" width="477" height="40"/></g>
<g fill="url(#pB)"><rect x="1142.800" y="878" width="477" height="30"/><rect x="1799.300" y="878" width="418" height="30"/><rect x="2336.400" y="878" width="477" height="30"/></g>
<!-- synth drop -->
<g transform="translate(0,950)"><use href="#gS1" x="1298"/><use href="#gS2" x="1392"/><use href="#gS2" x="1511"/><use href="#gS1" x="1574"/><use href="#gS1" x="1804"/><use href="#gS2" x="1869"/><use href="#gS2" x="1988"/><use href="#gS1" x="2050"/><use href="#gS2" x="2108"/><use href="#gS1" x="2194"/><use href="#gS2" x="2347"/><use href="#gS1" x="2416"/><use href="#gS2" x="2466"/><use href="#gS1" x="2611"/><use href="#gS1" x="2769"/></g>
<!-- toolroom -->
<g fill="#59622C"><rect x="785" y="1050" width="342" height="44"/><rect x="1143" y="1050" width="581" height="44"/><rect x="1740" y="1050" width="477" height="44"/><rect x="2336" y="1050" width="239" height="44"/></g>
<g fill="url(#wT)"><rect x="785" y="1054" width="342" height="40"/><rect x="1143" y="1054" width="581" height="40"/><rect x="1740" y="1054" width="477" height="40"/><rect x="2336" y="1054" width="239" height="40"/></g>
<g fill="url(#pT)"><rect x="784.700" y="1022" width="342" height="30"/><rect x="1142.800" y="1022" width="581" height="30"/><rect x="1739.600" y="1022" width="477.400" height="30"/><rect x="2336.400" y="1022" width="238.700" height="30"/></g>
<!-- splice -->
<g transform="translate(0,1095)"><rect x="1023" width="46" height="30" rx="3" fill="#A6B04A"/><rect x="1620" width="59" height="30" rx="3" fill="#A6B04A"/><rect x="2217" width="59" height="30" rx="3" fill="#A6B04A"/>
<rect x="1069" width="103" height="30" rx="3" fill="#4E5480"/><rect x="1679" width="103" height="30" rx="3" fill="#4E5480"/><rect x="2276" width="103" height="30" rx="3" fill="#4E5480"/>
<use href="#p" x="1027" y="9" fill="#fff"/><use href="#p" x="1624" y="9" fill="#fff"/><use href="#p" x="2221" y="9" fill="#fff"/>
<use href="#l" x="1070" y="5" stroke="#E0E8F4"/><use href="#l" x="1680" y="5" stroke="#E0E8F4"/><use href="#l" x="2277" y="5" stroke="#E0E8F4"/></g>
<g class="c" transform="translate(0,1116)" fill="#F0F0F0"><text x="1050" textLength="17" lengthAdjust="spacing">K..</text><text x="1647">K..</text><text x="2244">K..</text><text x="1095">Dela..el</text><text x="1705">Dela..el</text><text x="2302">Dela..el</text></g>
<!-- sample magic -->
<g transform="translate(0,1158)">
<rect x="546" width="239" height="80" fill="url(#pM)"/>
<use href="#gg" x="1232"/><use href="#gg" x="1247"/><use href="#gg" x="1471"/><use href="#gg" x="1486"/><use href="#gg" x="1829"/><use href="#gg" x="1844"/>
<use href="#gg" x="2068"/><use href="#gg" x="2187"/><use href="#gg" x="2426"/><use href="#gg" x="2545"/>
<use href="#gr" x="2008"/><use href="#gr" x="2127"/><use href="#gr" x="2366"/><use href="#gr" x="2485"/>
<use href="#gr" transform="translate(2083,0) scale(.6,1)"/><use href="#gr" transform="translate(2202,0) scale(.6,1)"/><use href="#gr" transform="translate(2441,0) scale(.6,1)"/><use href="#gr" transform="translate(2560,0) scale(.6,1)"/>
<use href="#gb" x="1352"/><use href="#gb" x="1590"/><use href="#gb" x="1948"/>
<rect x="2217" y="31" width="119" height="48" fill="#67743F"/><rect x="2217" y="31" width="119" height="48" fill="url(#pQ)"/>
<rect x="2217" y="1" width="119" height="29" rx="2" fill="#1E4060"/><use href="#l" x="2218" y="5" stroke="#B0D4F0"/>
<use href="#gt" x="1382"/><use href="#gt" x="1441"/><use href="#gt" x="1501"/><use href="#gt" x="1561"/><use href="#gt" x="1620"/><use href="#gt" x="1650"/><use href="#gt" x="1680"/><use href="#gt" x="1710"/><use href="#gt" x="1978"/><use href="#gt" x="2038"/><use href="#gt" x="2098"/><use href="#gt" x="2157"/><use href="#gt" x="2336"/><use href="#gt" x="2396"/><use href="#gt" x="2456"/><use href="#gt" x="2515"/>
<rect x="2575.100" width="238" height="80" fill="url(#pM)"/>
</g>
<g class="c" transform="translate(0,1180)" fill="#A8D0F0"><text x="2243">main..eq</text></g>
<!-- vox -->
<g fill="#2D555A"><rect x="1023" y="1268" width="134" height="42"/><rect x="1382" y="1268" width="372" height="42"/><rect x="1978" y="1268" width="357" height="42"/><rect x="2336" y="1268" width="237" height="42"/></g>
<g fill="url(#pZ)"><rect x="1023" y="1272" width="120" height="32"/><rect x="1382" y="1272" width="342" height="32"/><rect x="1978" y="1272" width="342" height="32"/><rect x="2336" y="1272" width="233" height="32"/></g>
<g fill="url(#pY)"><rect x="1382" y="1238" width="149" height="30"/><rect x="1978" y="1238" width="149" height="30"/><rect x="2336" y="1238" width="148" height="30"/></g>
<g fill="#A83488"><rect x="1023" y="1239" width="120" height="29" rx="2"/><rect x="1143" y="1239" width="14" height="29" rx="2"/><rect x="1531" y="1239" width="88" height="29" rx="2"/><rect x="1620" y="1239" width="119" height="29" rx="2"/><rect x="1740" y="1239" width="14" height="29" rx="2"/><rect x="2127" y="1239" width="92" height="29" rx="2"/><rect x="2220" y="1239" width="115" height="29" rx="2"/><rect x="2484" y="1239" width="89" height="29" rx="2"/></g>
<g transform="translate(0,1243)" stroke="#F4DCF0"><use href="#l" x="1025"/><use href="#l" x="1533"/><use href="#l" x="1622"/><use href="#l" x="2129"/><use href="#l" x="2222"/><use href="#l" x="2486"/></g>
<g class="c" transform="translate(0,1261)" fill="#F8E8F4"><text x="1050">Endl..vox</text><text x="1558">En..x</text><text x="1647">Endl..vox</text><text x="2154">End..x</text><text x="2247">Endl..ox</text><text x="2511">En..x</text></g>
<path d="M1023 1293L1143 1268V1308H1157M1531 1308L1724 1268V1308H1740V1268M1740 1308H1754M2127 1308L2320 1268V1308H2335M2484 1308L2573 1290" fill="none" stroke="#E8A4E0" stroke-width="2"/>
<!-- trade -->
<g transform="translate(0,1310)"><use href="#gX" x="546"/><use href="#gX" x="665"/><use href="#gX" x="904"/><use href="#gX" x="1262"/><use href="#gX" x="1859"/><use href="#gX" x="2575"/><use href="#gX" x="2695"/></g>
<g class="c" transform="translate(0,1331)" fill="#E4F4F8"><text x="572">T..</text><text x="691">T..</text><text x="930">T..</text><text x="1288">T..</text><text x="1885">T..</text><text x="2601">T..</text><text x="2721">T..</text></g>

<!-- track headers -->
<g>
<rect x="324" y="86" width="199" height="32" rx="12" fill="#9A9C84"/><rect x="324" y="86" width="30" height="16" fill="#9A9C84"/><rect x="400" y="102" width="123" height="16" fill="#9A9C84"/>
<rect x="336" y="118" width="188" height="32" fill="#4A1C78"/><rect x="336" y="150" width="188" height="32" fill="#CBC4CC"/><rect x="336" y="182" width="188" height="32" fill="#2A1F84"/><rect x="336" y="214" width="188" height="32" fill="#CFC9C4"/><rect x="336" y="246" width="188" height="32" fill="#311058"/><rect x="336" y="278" width="188" height="32" fill="#BCCBD4"/><rect x="336" y="310" width="188" height="32" fill="#A83C40"/><rect x="336" y="342" width="188" height="32" fill="#43909E"/><rect x="336" y="374" width="188" height="72" fill="#205C48"/><rect x="336" y="446" width="188" height="72" fill="#5B6A78"/><rect x="336" y="518" width="188" height="72" fill="#4530A8"/><rect x="336" y="590" width="188" height="72" fill="#2B1C80"/><rect x="336" y="662" width="188" height="72" fill="#A53A3C"/><rect x="336" y="734" width="188" height="72" fill="#707EAF"/><rect x="336" y="806" width="188" height="72" fill="#741818"/><rect x="336" y="878" width="188" height="72" fill="#B6CBCA"/><rect x="336" y="950" width="188" height="60" fill="#A4927C"/><path d="M336 1010H524V1012Q524 1022 514 1022H336Z" fill="#A4927C"/>
<rect x="324" y="1022" width="200" height="72" rx="12" fill="#98A636"/><rect x="324" y="1022" width="30" height="60" fill="#98A636"/>
<path d="M324 1094H514Q524 1094 524 1110 524 1126 514 1126H324Z" fill="#BECE6C"/>
<path d="M324 1126H514Q524 1126 524 1142 524 1158 514 1158H324Z" fill="#4A535C"/>
<rect x="324" y="1158" width="200" height="80" rx="12" fill="#BDCC6A"/><rect x="324" y="1158" width="30" height="60" fill="#BDCC6A"/><rect x="400" y="1220" width="124" height="18" fill="#BDCC6A"/>
<path d="M336 1238H524V1298Q524 1310 512 1310H336Z" fill="#4E8B84"/>
<path d="M324 1310H512Q524 1310 524 1322V1370Q524 1382 512 1382H324Z" fill="#BDCC6A"/>
<path d="M324 1382H512Q524 1382 524 1394V1442Q524 1454 512 1454H324Z" fill="#4A535C"/>
<path d="M324 1455H524V1458H324Z" fill="#4A535C"/>
</g>
<g class="ts">
<text x="329" y="108" fill="#F4F4EC" textLength="38" lengthAdjust="spacingAndGlyphs">kick</text>
<text x="341" y="140" fill="#DCC0F8" textLength="104" lengthAdjust="spacingAndGlyphs">kick..w cut</text>
<text x="341" y="172" fill="#3E3844" textLength="103" lengthAdjust="spacingAndGlyphs">crash main</text>
<text x="348" y="204" fill="#A89CF0" textLength="42" lengthAdjust="spacingAndGlyphs">Ride</text>
<text x="341" y="236" fill="#3C3838" textLength="149" lengthAdjust="spacingAndGlyphs">synth one shot</text>
<text x="347" y="268" fill="#A870F0" textLength="91" lengthAdjust="spacingAndGlyphs">Nova..mb</text>
<text x="347" y="300" fill="#2E3C48" textLength="98" lengthAdjust="spacingAndGlyphs">SNAR..OLL</text>
<text x="341" y="332" fill="#FFF4F0" textLength="88" lengthAdjust="spacingAndGlyphs">open hat</text>
<text x="347" y="364" fill="#E8FFFF" textLength="80" lengthAdjust="spacingAndGlyphs">FX alien</text>
<text x="328" y="1118" fill="#23280C" textLength="162" lengthAdjust="spacingAndGlyphs">Splice –..MR Vol.3</text>
<text x="328" y="1149" fill="#7F8890" textLength="80" lengthAdjust="spacingAndGlyphs">Track 23</text>
</g>
<g class="tb">
<text x="349" y="399" fill="#A8E8C8" textLength="89" lengthAdjust="spacingAndGlyphs">FX DAZE</text>
<text x="341" y="471" fill="#F0F0EC" textLength="41" lengthAdjust="spacingAndGlyphs">fx s</text>
<text x="341" y="543" fill="#FFFFFF" textLength="110" lengthAdjust="spacingAndGlyphs">Vinyl Soft</text>
<text x="341" y="615" fill="#B0A8F0" textLength="58" lengthAdjust="spacingAndGlyphs">top 1</text>
<text x="341" y="687" fill="#FFE8E4" textLength="58" lengthAdjust="spacingAndGlyphs">top 2</text>
<text x="341" y="759" fill="#FFFFFF" textLength="58" lengthAdjust="spacingAndGlyphs">top 3</text>
<text x="349" y="831" fill="#F0B0A0" textLength="45" lengthAdjust="spacingAndGlyphs">clap</text>
<text x="341" y="903" fill="#33494E" textLength="131" lengthAdjust="spacingAndGlyphs">Bendir perc</text>
<text x="341" y="975" fill="#FFFFFF" textLength="124" lengthAdjust="spacingAndGlyphs">synth drop</text>
<text x="328" y="1047" fill="#FFFFF4" textLength="190" lengthAdjust="spacingAndGlyphs">Toolroom – Hous..</text>
<text x="328" y="1183" fill="#141608" textLength="190" lengthAdjust="spacingAndGlyphs">Sample Magic – D..</text>
<text x="341" y="1263" fill="#FFFFFF" textLength="177" lengthAdjust="spacingAndGlyphs">background vox</text>
<text x="328" y="1335" fill="#141608" textLength="190" lengthAdjust="spacingAndGlyphs">Toolroom – Trade..</text>
<text x="328" y="1407" fill="#7F8890" textLength="92" lengthAdjust="spacingAndGlyphs">Track 27</text>
</g>
<!-- track icons -->
<g>
<use href="#w" transform="translate(429,102) scale(.78)" fill="#FFFFFF"/>
<path d="M461 107L470 95 479 107Z" fill="#F4F4F0"/>
<use href="#l" transform="translate(452,123) scale(1.050)" stroke="#C8A8F0"/>
<use href="#w" transform="translate(464,166) scale(.78)" fill="#3C3440"/>
<use href="#w" transform="translate(464,198) scale(.78)" fill="#9C90F0"/>
<use href="#w" transform="translate(464,262) scale(.78)" fill="#9A60EC"/>
<use href="#w" transform="translate(464,294) scale(.78)" fill="#2E3C48"/>
<use href="#w" transform="translate(464,326) scale(.78)" fill="#FFECE8"/>
<use href="#w" transform="translate(464,358) scale(.78)" fill="#E8FFFF"/>
<use href="#w" transform="translate(465,423)" fill="#88D4B4"/>
<use href="#w" transform="translate(465,567)" fill="#E8E4FF"/>
<use href="#w" transform="translate(465,639)" fill="#A8A0EC"/>
<use href="#w" transform="translate(465,711)" fill="#FFE4E0"/>
<use href="#w" transform="translate(465,783)" fill="#FFFFFF"/>
<use href="#w" transform="translate(465,855)" fill="#E88A80"/>
<use href="#w" transform="translate(465,927)" fill="#33494E"/>
<path d="M461 1070H479L470 1080Z" fill="#F4F8E0"/>
<path d="M461 1224L470 1214 479 1224Z" fill="#23280C"/>
</g>
<!-- LEDs -->
<g>
<use href="#L" x="502" y="102"/><use href="#L" x="502" y="134"/><use href="#L" x="502" y="166"/><use href="#L" x="502" y="198"/><use href="#L" x="502" y="230"/><use href="#L" x="502" y="262"/><use href="#L" x="502" y="294"/><use href="#L" x="502" y="326"/><use href="#L" x="502" y="358"/>
<use href="#L" x="503" y="426"/><use href="#L" x="503" y="498"/><use href="#L" x="503" y="570"/><use href="#L" x="503" y="642"/><use href="#L" x="503" y="714"/><use href="#L" x="503" y="786"/><use href="#L" x="503" y="858"/><use href="#L" x="503" y="930"/><use href="#L" x="503" y="1002"/><use href="#L" x="502" y="1074"/><use href="#L" x="502" y="1110"/><use href="#L" x="502" y="1142"/><use href="#L" x="502" y="1218"/><use href="#L" x="502" y="1290"/><use href="#L" x="502" y="1362"/><use href="#L" x="502" y="1434"/>
</g>
<g fill="#000" fill-opacity=".35">
<use href="#D" x="352" y="435"/><use href="#D" x="352" y="507"/><use href="#D" x="352" y="579"/><use href="#D" x="352" y="651"/><use href="#D" x="352" y="723"/><use href="#D" x="352" y="795"/><use href="#D" x="352" y="867"/><use href="#D" x="352" y="939"/><use href="#D" x="352" y="1011"/><use href="#D" x="352" y="1082"/><use href="#D" x="352" y="1226"/><use href="#D" x="352" y="1298"/><use href="#D" x="352" y="1370"/><use href="#D" x="352" y="1442"/>
</g>

<!-- rack scrollbar -->
<rect x="282" y="86" width="28" height="1372" fill="url(#pHatch)"/>
<rect x="282" y="86" width="28" height="28" fill="#4B555D" stroke="#2A3136"/><rect x="294" y="96" width="4" height="8" fill="#161C20"/>
<rect x="282" y="116" width="28" height="26" fill="#4B555D" stroke="#2A3136"/><path d="M290 133L296 126 302 133" fill="none" stroke="#161C20" stroke-width="2"/>
<rect x="282" y="278" width="28" height="356" fill="#4F5860" stroke="#5C666D"/>
<rect x="282" y="1432" width="28" height="26" fill="#4B555D" stroke="#2A3136"/><path d="M290 1442L296 1449 302 1442" fill="none" stroke="#161C20" stroke-width="2"/>

<!-- right scrollbar -->
<rect x="2838" y="46" width="42" height="1412" fill="#2D373E"/>
<rect x="2840" y="86" width="38" height="1372" fill="url(#pHatch)"/>
<rect x="2840" y="46" width="38" height="38" fill="#4B555D" stroke="#2A3136"/><path d="M2851 70L2859 61 2867 70" fill="none" stroke="#161C20" stroke-width="2"/>
<rect x="2840" y="86" width="38" height="66" fill="#4F5860" stroke="#5C666D"/>
<rect x="2840" y="1420" width="38" height="38" fill="#4B555D" stroke="#2A3136"/><path d="M2851 1434L2859 1444 2867 1434" fill="none" stroke="#161C20" stroke-width="2"/>

<!-- rack items -->
<g class="rk">
<g transform="translate(0,83)"><rect x="8.500" y=".5" width="269" height="55" rx="3" fill="#8A9CCB" stroke="#5C6C90"/><rect x="60" y="8" width="217" height="40" fill="url(#rN)"/><text x="14" y="35" fill="#fff" textLength="50" lengthAdjust="spacingAndGlyphs">top 3</text><use href="#w" transform="translate(257,25)" fill="#fff"/></g>
<g transform="translate(0,145)"><rect x="8.500" y=".5" width="269" height="55" rx="3" fill="#B5B8A0" stroke="#84866F"/><path d="M18 28q2-34 5 0t5 0 5 0q3-30 6 0t7 0q3-28 7 0t7 0q4-26 8 0t9 0q4-24 9 0t11 0q5-22 11 0t13 0q6-20 13 0t14 0q6-16 14 0t15 0q7-10 16 0t18 0q8-8 18 0" fill="none" stroke="#000" stroke-opacity=".24" stroke-width="2"/><text x="15" y="35" fill="#fff" textLength="38" lengthAdjust="spacingAndGlyphs">kick</text><use href="#w" transform="translate(257,25)" fill="#fff"/></g>
<g transform="translate(0,207)"><rect x="8.500" y=".5" width="269" height="55" rx="3" fill="#8B3A3A" stroke="#6A2224"/><use href="#rD" y="27" fill="#000" fill-opacity=".22"/><text x="21" y="35" fill="#E8E4F4" textLength="40" lengthAdjust="spacingAndGlyphs">clap</text><use href="#w" transform="translate(257,25)" fill="#FFB4A8"/></g>
<g transform="translate(0,269)"><rect x="8.500" y=".5" width="269" height="55" rx="3" fill="#A06AA6" stroke="#7A4A82"/><use href="#rD" y="27" fill="#000" fill-opacity=".2"/><text x="21" y="35" fill="#fff" textLength="75" lengthAdjust="spacingAndGlyphs">clap  #2</text><use href="#w" transform="translate(257,25)" fill="#fff"/></g>
<g transform="translate(0,331)"><rect x="8.500" y=".5" width="269" height="55" rx="3" fill="#8CCFDE" stroke="#6AAAB8"/><use href="#rD" y="27" fill="#000" fill-opacity=".25"/><rect x="40" y="15" width="140" height="24" fill="url(#rN)"/><text x="15" y="34" fill="#3A3A20" textLength="217" lengthAdjust="spacingAndGlyphs">snare clap palm b2 –..</text><use href="#w" transform="translate(257,25)" fill="#fff"/></g>
<g transform="translate(0,393)"><rect x="8.500" y=".5" width="269" height="55" rx="3" fill="#5F4EB8" stroke="#46389A"/><rect x="9" y="8" width="268" height="40" fill="url(#rN)"/><text x="15" y="35" fill="#fff" textLength="92" lengthAdjust="spacingAndGlyphs">Vinyl Soft</text><use href="#w" transform="translate(257,25)" fill="#E0D8FF"/></g>
<g transform="translate(0,455)"><rect x="8.500" y=".5" width="269" height="55" rx="3" fill="#DCD8DC" stroke="#F4F2F4"/><use href="#rD" y="27" fill="#000" fill-opacity=".26"/><text x="15" y="35" fill="#6A5C74" textLength="106" lengthAdjust="spacingAndGlyphs">crash main</text><use href="#w" transform="translate(257,25)" fill="#fff"/></g>
<g transform="translate(0,517)"><rect x="8.500" y=".5" width="269" height="55" rx="3" fill="#BECE6C" stroke="#98A84C"/><path d="M35 27L50 6 65 27 50 48ZM92 27L110 14 128 27 110 42ZM160 27L178 8 196 27 178 46ZM218 27L232 8 246 27 232 48Z" fill="#000" fill-opacity=".18"/><rect x="30" y="12" width="220" height="30" fill="url(#rN)" opacity=".6"/><text x="15" y="35" fill="#101208" textLength="210" lengthAdjust="spacingAndGlyphs">TA_HW_BASS_LOOP_..</text><use href="#w" transform="translate(257,25)" fill="#fff"/></g>
<g transform="translate(0,579)"><rect x="8.500" y=".5" width="269" height="55" rx="3" fill="#B05254" stroke="#8E3A3E"/><path d="M12 27L20 11 28 27 20 43ZM45 27L53 11 61 27 53 43ZM77 27L85 11 93 27 85 43ZM110 27L118 11 126 27 118 43ZM142 27L150 11 158 27 150 43ZM175 27L183 11 191 27 183 43ZM207 27L215 11 223 27 215 43ZM240 27L248 11 256 27 248 43Z" fill="#000" fill-opacity=".2"/><rect x="9" y="27" width="268" height="1.500" fill="#000" fill-opacity=".2"/><text x="15" y="35" fill="#fff" textLength="87" lengthAdjust="spacingAndGlyphs">open hat</text><use href="#w" transform="translate(257,25)" fill="#FFD8D4"/></g>
<g transform="translate(0,641)"><rect x="8.500" y=".5" width="269" height="55" rx="3" fill="#62A6B4" stroke="#3E7C8C"/><use href="#rB" y="27" fill="#000" fill-opacity=".25"/><text x="21" y="35" fill="#fff" textLength="77" lengthAdjust="spacingAndGlyphs">FX alien</text><use href="#w" transform="translate(257,25)" fill="#fff"/></g>
<g transform="translate(0,703)"><rect x="8.500" y=".5" width="269" height="55" rx="1" fill="#357460" stroke="#B8E060"/><use href="#rB" y="27" fill="#000" fill-opacity=".25"/><text x="21" y="35" fill="#C8ECC8" textLength="77" lengthAdjust="spacingAndGlyphs">FX DAZE</text><use href="#w" transform="translate(257,25)" fill="#B4FFDC"/></g>
<g transform="translate(0,765)"><rect x="8.500" y=".5" width="269" height="55" rx="3" fill="#7E4646" stroke="#662C30"/><use href="#rL" y="27" fill="#000" fill-opacity=".22"/><text x="21" y="35" fill="#E4DCE8" textLength="95" lengthAdjust="spacingAndGlyphs">FX TRICKY</text><use href="#w" transform="translate(257,25)" fill="#FFC0B8"/></g>
<g transform="translate(0,827)"><rect x="8.500" y=".5" width="269" height="55" rx="3" fill="#7E4646" stroke="#662C30"/><use href="#rL" y="27" fill="#000" fill-opacity=".22"/><text x="21" y="35" fill="#E4DCE8" textLength="130" lengthAdjust="spacingAndGlyphs">FX TRICKY  #3</text><use href="#w" transform="translate(257,25)" fill="#FFC0B8"/></g>
<g transform="translate(0,889)"><rect x="8.500" y=".5" width="269" height="55" rx="3" fill="#7E4646" stroke="#662C30"/><use href="#rL" transform="translate(-20,27) scale(.7,1)" fill="#000" fill-opacity=".22"/><text x="21" y="35" fill="#E4DCE8" textLength="130" lengthAdjust="spacingAndGlyphs">FX TRICKY  #2</text><use href="#w" transform="translate(257,25)" fill="#FFC0B8"/></g>
<g transform="translate(0,951)"><rect x="8.500" y=".5" width="269" height="55" rx="3" fill="#BCCC68" stroke="#98A84C"/><path d="M64 27L72 2 80 27 72 52ZM88 27L95 2 102 27 95 52ZM132 27L142 2 152 27 142 52ZM180 27L190 2 200 27 190 52ZM225 27L235 2 245 27 235 52Z" fill="#000" fill-opacity=".18"/><rect x="50" y="10" width="210" height="34" fill="url(#rN)" opacity=".7"/><text x="15" y="35" fill="#101208" textLength="207" lengthAdjust="spacingAndGlyphs">dv2_128_Em_shutti..</text><use href="#w" transform="translate(257,25)" fill="#fff"/></g>
<g transform="translate(0,1013)"><rect x="8.500" y=".5" width="269" height="55" rx="3" fill="#505A32" stroke="#3A4224"/><path d="M64 27L72 6 80 27 72 48ZM112 27L120 2 128 27 120 52ZM155 27L165 2 175 27 165 52ZM182 27L190 2 198 27 190 52ZM225 27L235 2 245 27 235 52Z" fill="#000" fill-opacity=".2"/><rect x="50" y="10" width="210" height="34" fill="url(#rN)" opacity=".7"/><text x="15" y="35" fill="#A8D8C8" textLength="207" lengthAdjust="spacingAndGlyphs">dv2_128_Em_shutti..</text><use href="#w" transform="translate(257,25)" fill="#F0F0D8"/></g>
<g transform="translate(0,1075)"><rect x="8.500" y=".5" width="269" height="55" rx="3" fill="#403694" stroke="#2A2478"/><path d="M12 27V8L22 20 76 25V29L22 34 12 46ZM77 27V8L90 20 141 25V29L90 34 77 46ZM142 27V6L155 20 206 25V29L155 34 142 46ZM207 27V6L220 20 276 25V29L220 34 207 46Z" fill="#000" fill-opacity=".25"/><text x="21" y="35" fill="#E0DCF8" textLength="42" lengthAdjust="spacingAndGlyphs">Ride</text><use href="#w" transform="translate(257,25)" fill="#B4A4F8"/></g>
<g transform="translate(0,1137)"><rect x="8.500" y=".5" width="269" height="55" rx="3" fill="#3C1F52" stroke="#241038"/><rect x="9" y="8" width="268" height="40" fill="url(#rN)"/><text x="21" y="35" fill="#E8A8C0" textLength="113" lengthAdjust="spacingAndGlyphs">Nova_Tamb</text><use href="#w" transform="translate(257,25)" fill="#C4A0E8"/></g>
<g transform="translate(0,1199)"><rect x="8.500" y=".5" width="269" height="55" rx="3" fill="#4E4A60" stroke="#3E3A4E"/><use href="#rL" transform="translate(-10,27) scale(1,1.200)" fill="#000" fill-opacity=".22"/><text x="21" y="35" fill="#E8DCE8" textLength="118" lengthAdjust="spacingAndGlyphs">FX_ Downer</text><use href="#w" transform="translate(257,25)" fill="#F0E8F4"/></g>
<g transform="translate(0,1261)"><rect x="8.500" y=".5" width="269" height="55" rx="3" fill="#6EA8D2" stroke="#5088AE"/><use href="#rL" transform="translate(100,27) scale(.6,1.100)" fill="#000" fill-opacity=".22"/><text x="15" y="35" fill="#fff" textLength="129" lengthAdjust="spacingAndGlyphs">fx shot_jump</text><use href="#w" transform="translate(257,25)" fill="#fff"/></g>
<g transform="translate(0,1323)"><rect x="8.500" y=".5" width="269" height="55" rx="3" fill="#44369A" stroke="#2E2678"/><path d="M20 27L60 20 160 26 270 27V28L160 29 60 34Z" fill="#000" fill-opacity=".25"/><text x="21" y="35" fill="#F0ECFF" textLength="90" lengthAdjust="spacingAndGlyphs">fx_ camp</text><use href="#w" transform="translate(257,25)" fill="#B4A4F8"/></g>
<g transform="translate(0,1385)"><rect x="8.500" y=".5" width="269" height="55" rx="3" fill="#8476B8" stroke="#665A9C"/><use href="#rD" y="27" fill="#000" fill-opacity=".22"/><text x="21" y="35" fill="#fff" textLength="147" lengthAdjust="spacingAndGlyphs">synth_oneshot</text><use href="#w" transform="translate(257,25)" fill="#fff"/></g>
<rect x="8.500" y="1447.500" width="269" height="20" rx="3" fill="#98C8D0" stroke="#7AAAB2"/>
</g>
<rect x="0" y="84" width="282" height="2" fill="#22292E"/>
</svg>
</body></html>
